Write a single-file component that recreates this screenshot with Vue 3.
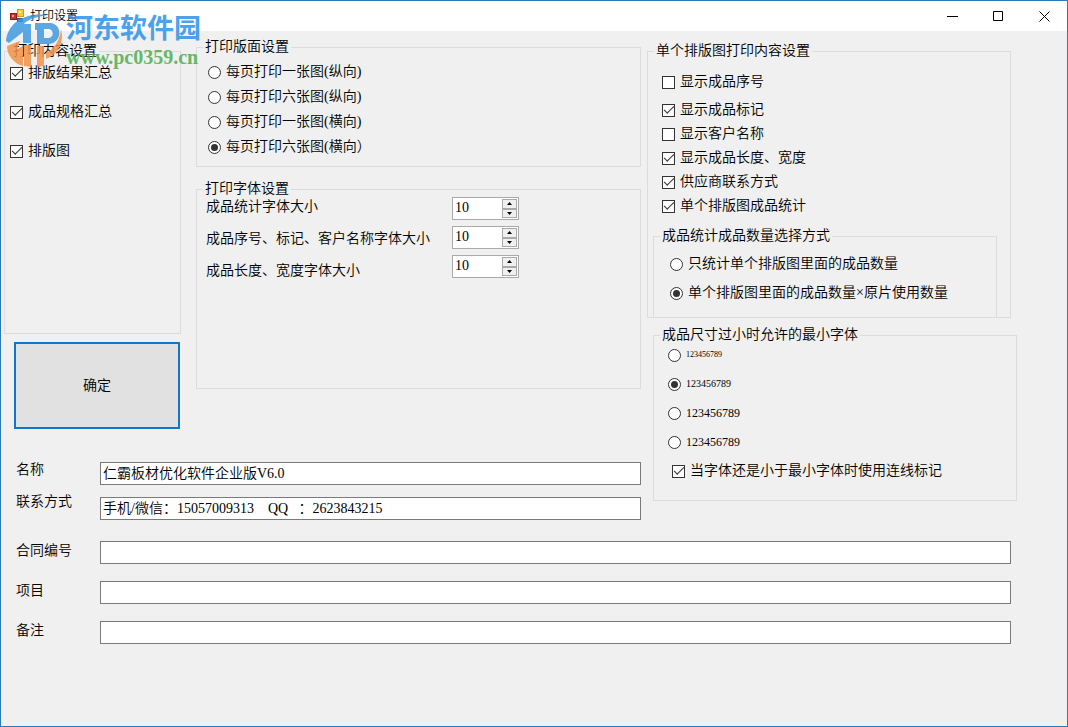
<template>
  <div class="window">
    <header class="titlebar">
      <svg class="app-icon" width="14" height="14" viewBox="0 0 14 14" aria-hidden="true">
        <rect x=".5" y="4.5" width="6" height="6" fill="#c8322d" stroke="#8a1d1a" />
        <rect x="2" y="6" width="2" height="2" fill="#f09a94" />
        <rect x="7.5" y=".5" width="6" height="7" fill="#f8c93c" stroke="#c79a1e" />
        <rect x="9" y="2" width="2" height="2" fill="#fdeba8" />
        <rect x="7.5" y="9.5" width="5" height="3" fill="#3f78d0" stroke="#2a559c" />
      </svg>
      <h1>打印设置</h1>
      <div class="controls">
        <button type="button" aria-label="最小化">
          <svg width="11" height="11"><path d="M0 5.5h11" /></svg>
        </button>
        <button type="button" aria-label="最大化">
          <svg width="11" height="11"><path d="M.5 .5h9v9h-9z" /></svg>
        </button>
        <button type="button" aria-label="关闭">
          <svg width="11" height="11"><path d="M.5 .5l10 10M10.5 .5l-10 10" /></svg>
        </button>
      </div>
    </header>

    <form class="body" @submit.prevent="save">
      <div class="top">
        <div class="main">
          <div class="upper">
            <div class="left">
              <fieldset class="content-box">
                <legend>打印内容设置</legend>
                <label v-for="item in contents" :key="item.text" class="option">
                  <input v-model="item.checked" type="checkbox" />{{ item.text }}
                </label>
              </fieldset>
              <button type="submit" class="ok">确定</button>
            </div>

            <div class="middle">
              <fieldset class="layout-box">
                <legend>打印版面设置</legend>
                <label v-for="(text, i) in layouts" :key="text" class="option">
                  <input v-model="layout" type="radio" name="layout" :value="i" />{{ text }}
                </label>
              </fieldset>

              <fieldset class="font-box">
                <legend>打印字体设置</legend>
                <div class="fonts">
                  <div class="font-labels">
                    <label v-for="(f, i) in fonts" :key="f.text" :for="'font' + i">{{ f.text }}</label>
                  </div>
                  <div class="spinners">
                    <div v-for="(f, i) in fonts" :key="f.text" class="spinner">
                      <input :id="'font' + i" v-model.number="f.size" type="number" min="1" />
                      <div class="arrows">
                        <button type="button" aria-label="增大" @click="f.size++">
                          <svg width="5" height="3"><path d="M0 3L2.5 0L5 3z" /></svg>
                        </button>
                        <button type="button" aria-label="减小" @click="f.size--">
                          <svg width="5" height="3"><path d="M0 0L2.5 3L5 0z" /></svg>
                        </button>
                      </div>
                    </div>
                  </div>
                </div>
              </fieldset>
            </div>
          </div>

          <div class="contact">
            <div class="contact-labels">
              <label for="name">名称</label>
              <label for="phone">联系方式</label>
            </div>
            <div class="contact-inputs">
              <input id="name" v-model="name" class="text" type="text" />
              <input id="phone" v-model="phone" class="text" type="text" />
            </div>
          </div>
        </div>

        <div class="side">
          <fieldset class="single-box">
            <legend>单个排版图打印内容设置</legend>
            <label v-for="item in singles" :key="item.text" class="option">
              <input v-model="item.checked" type="checkbox" />{{ item.text }}
            </label>
            <fieldset class="count-box">
              <legend>成品统计成品数量选择方式</legend>
              <label v-for="(text, i) in counts" :key="text" class="option">
                <input v-model="count" type="radio" name="count" :value="i" />{{ text }}
              </label>
            </fieldset>
          </fieldset>

          <fieldset class="min-box">
            <legend>成品尺寸过小时允许的最小字体</legend>
            <label v-for="(size, i) in minSizes" :key="i" class="option" :class="size">
              <input v-model="minFont" type="radio" name="minFont" :value="i" />123456789
            </label>
            <label class="option link-mark">
              <input v-model="linkMark" type="checkbox" />当字体还是小于最小字体时使用连线标记
            </label>
          </fieldset>
        </div>
      </div>

      <div class="extra">
        <div v-for="field in extras" :key="field.id" class="row">
          <label :for="field.id">{{ field.text }}</label>
          <input :id="field.id" v-model="field.value" class="text" type="text" />
        </div>
      </div>
    </form>

    <div class="watermark">
      <svg width="58" height="56" viewBox="0 0 58 56" aria-hidden="true">
        <path fill="#3f9ae0" d="M1 29C3 11 19 0 43 3C30 5 22 8 19 12H26V31H18V20L4 31Z" />
        <path fill="#3f9ae0" fill-rule="evenodd" d="M30 11H46C58 13 57 31 44 32H32V18H30ZM39 17V26H44C49 25 49 18 44 17Z" />
        <path fill="#f3924a" d="M2 34L15 29L12 37L18 34V54C8 51 2 43 2 34ZM19 33H26V55L19 54ZM32 34H39V54L32 55ZM56 17C60 31 52 43 41 47V41C50 36 55 28 56 17Z" />
      </svg>
      <div class="brand">
        <span class="site">河东软件园</span>
        <span class="url">www.pc0359.cn</span>
      </div>
    </div>
  </div>
</template>

<script setup>
import { ref } from 'vue'

const contents = ref([
  { text: '排版结果汇总', checked: true },
  { text: '成品规格汇总', checked: true },
  { text: '排版图', checked: true }
])

const layouts = [
  '每页打印一张图(纵向)',
  '每页打印六张图(纵向)',
  '每页打印一张图(横向)',
  '每页打印六张图(横向）'
]
const layout = ref(3)

const fonts = ref([
  { text: '成品统计字体大小', size: 10 },
  { text: '成品序号、标记、客户名称字体大小', size: 10 },
  { text: '成品长度、宽度字体大小', size: 10 }
])

const singles = ref([
  { text: '显示成品序号', checked: false },
  { text: '显示成品标记', checked: true },
  { text: '显示客户名称', checked: false },
  { text: '显示成品长度、宽度', checked: true },
  { text: '供应商联系方式', checked: true },
  { text: '单个排版图成品统计', checked: true }
])

const counts = ['只统计单个排版图里面的成品数量', '单个排版图里面的成品数量×原片使用数量']
const count = ref(1)

const minSizes = ['tiny', 'small', 'medium', 'medium']
const minFont = ref(1)
const linkMark = ref(true)

const name = ref('仁霸板材优化软件企业版V6.0')
const phone = ref('手机/微信：15057009313    QQ   ：2623843215')

const extras = ref([
  { id: 'contract', text: '合同编号', value: '' },
  { id: 'project', text: '项目', value: '' },
  { id: 'remark', text: '备注', value: '' }
])

const save = () => {
  console.log(layout.value, count.value, minFont.value)
}
</script>

<style>
body {
  background: #f0f0f0;
}
</style>

<style scoped>
.window {
  position: relative;
  box-sizing: border-box;
  min-height: 100vh;
  border: 1px solid #2a7ab8;
  background: #f0f0f0;
  color: #000;
  font-family: "Liberation Serif", "Noto Sans CJK SC", serif;
  font-size: 14px;
  font-weight: 350;
  line-height: 20px;
}
.titlebar {
  display: flex;
  align-items: center;
  height: 30px;
  padding-left: 9px;
  background: #fff;
}
.titlebar h1 {
  flex: 1;
  margin: 0 0 0 6px;
  font-size: 12px;
  font-weight: 350;
}
.controls {
  display: flex;
}
.controls button {
  display: flex;
  align-items: center;
  justify-content: center;
  width: 46px;
  height: 30px;
  padding: 0;
  border: 0;
  background: none;
}
.controls path {
  fill: none;
  stroke: #000;
}
.body {
  padding: 8px 50px 20px 3px;
}
.top {
  display: grid;
  grid-template-columns: 1fr 370px;
  gap: 6px;
}
.upper {
  display: grid;
  grid-template-columns: 177px 1fr;
  gap: 15px;
}
fieldset {
  min-width: 0;
  margin: 0;
  padding: 0;
  border: 1px solid #dcdcdc;
}
legend {
  margin-left: 6px;
  padding: 0 2px;
  line-height: 16px;
}
.option {
  display: flex;
  align-items: center;
  gap: 5px;
  height: 20px;
  line-height: 22px;
  white-space: nowrap;
}
input {
  box-sizing: border-box;
  margin: 0;
  font: inherit;
  color: inherit;
}
input[type="checkbox"],
input[type="radio"] {
  display: grid;
  place-items: center;
  flex: none;
  appearance: none;
  width: 13px;
  height: 13px;
  border: 1px solid #333;
  background: #fff;
}
input[type="radio"] {
  border-radius: 50%;
}
input[type="radio"]:checked::before {
  content: "";
  width: 7px;
  height: 7px;
  border-radius: 50%;
  background: #333;
}
input[type="checkbox"]:checked::before {
  content: "";
  width: 10px;
  height: 5px;
  margin-bottom: 3px;
  box-sizing: border-box;
  border-left: 1px solid #333;
  border-bottom: 1px solid #333;
  transform: rotate(-45deg);
}
.left {
  padding-top: 4px;
}
.content-box {
  display: flex;
  flex-direction: column;
  gap: 19px;
  height: 291px;
  box-sizing: border-box;
  padding-top: 4px;
}
.content-box .option {
  padding-left: 5px;
}
.ok {
  display: block;
  width: 166px;
  height: 87px;
  margin: 8px 0 0 10px;
  border: 2px solid #0f78c8;
  background: #e1e1e1;
  color: #000;
  font: inherit;
}
.middle {
  display: flex;
  flex-direction: column;
  gap: 14px;
}
.layout-box {
  display: flex;
  flex-direction: column;
  gap: 5px;
  padding: 7px 0 9px;
}
.layout-box .option {
  padding-left: 11px;
}
.font-box {
  box-sizing: border-box;
  height: 208px;
}
.fonts {
  display: flex;
  padding-left: 9px;
}
.font-labels {
  display: flex;
  flex-direction: column;
  gap: 12px;
  width: 246px;
}
.spinners {
  display: flex;
  flex-direction: column;
  gap: 6px;
}
.spinner {
  display: flex;
  box-sizing: border-box;
  width: 67px;
  height: 23px;
  padding: 1px;
  border: 1px solid #aaa;
  background: #fff;
}
.spinner input {
  flex: 1;
  min-width: 0;
  height: 17px;
  padding: 0 1px;
  border: 0;
  background: none;
  appearance: textfield;
}
.spinner input::-webkit-inner-spin-button {
  appearance: none;
}
.arrows {
  display: flex;
  flex-direction: column;
}
.arrows button {
  display: flex;
  align-items: center;
  justify-content: center;
  flex: 1;
  width: 15px;
  padding: 0;
  border: 1px solid #aaa;
  background: #f0f0f0;
}
.contact {
  display: grid;
  grid-template-columns: 84px 1fr;
  padding: 33px 0 0 12px;
}
.contact-labels {
  display: flex;
  flex-direction: column;
  gap: 16px;
  line-height: 16px;
}
.contact-inputs {
  display: flex;
  flex-direction: column;
  gap: 12px;
}
.text {
  width: 100%;
  height: 23px;
  padding: 0 2px 4px;
  border: 1px solid #7a7a7a;
  background: #fff;
}
.side {
  padding-top: 4px;
}
.single-box {
  margin-right: 6px;
  padding-top: 13px;
}
.single-box > .option {
  margin: 0 0 4px 14px;
}
.single-box > legend + .option {
  margin-bottom: 8px;
}
.count-box {
  margin: 12px 13px 0 5px;
  padding: 10px 0 14px;
  border-bottom: 0;
}
.count-box .option {
  padding-left: 16px;
}
.count-box .option + .option {
  margin-top: 9px;
}
.min-box {
  display: flex;
  flex-direction: column;
  gap: 9px;
  margin: 9px 0 0 6px;
  padding: 2px 0 19px;
}
.min-box .option {
  padding-left: 14px;
}
.min-box .link-mark {
  padding-left: 18px;
}
.tiny {
  font-size: 8px;
}
.small {
  font-size: 10px;
}
.medium {
  font-size: 12px;
}
.extra {
  display: flex;
  flex-direction: column;
  gap: 17px;
  padding: 21px 6px 0 12px;
}
.row {
  display: grid;
  grid-template-columns: 84px 1fr;
}
/* site mark lies over the title bar and first group */
.watermark {
  position: absolute;
  top: 11px;
  left: 4px;
  display: flex;
  gap: 3px;
  opacity: 0.85;
  pointer-events: none;
}
.brand {
  display: flex;
  flex-direction: column;
}
.site {
  color: #2f92ea;
  font-size: 27px;
  font-weight: 700;
  line-height: 34px;
}
.url {
  color: #4caf50;
  font-size: 20px;
  font-weight: 700;
  line-height: 22px;
}
</style>
